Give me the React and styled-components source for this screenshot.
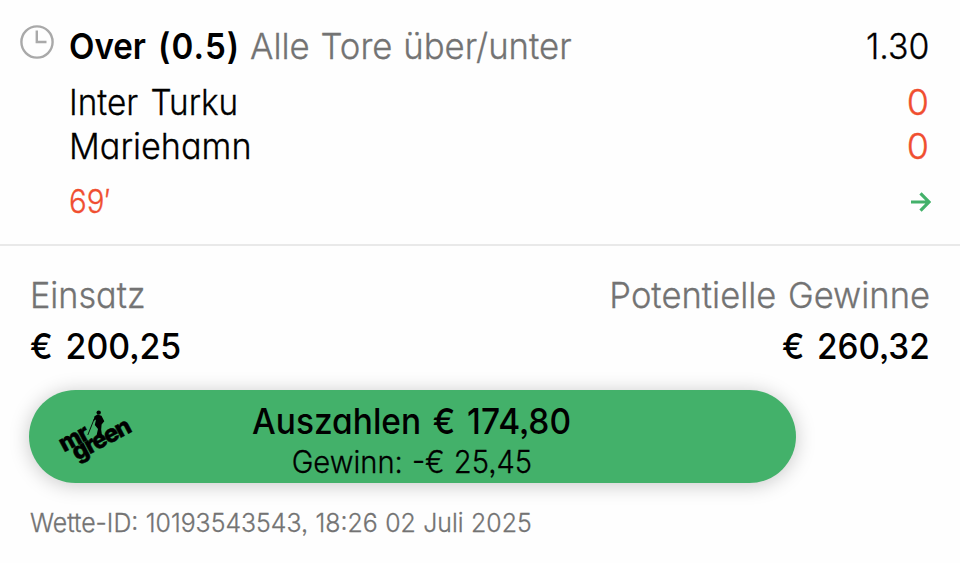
import styled, { createGlobalStyle } from "styled-components";

function App() {
  return (
    <>
      <GlobalStyle />
      <Card>
        <Selection>
          <Clock viewBox='0 0 34 34'>
            <circle cx='17' cy='17' r='15.6' />
            <path d='M16.8 5.5V17H26.5' />
          </Clock>
          <Details>
            <Row $height={57}>
              <Market>
                <Label $weight={600} $scale={0.92} $word={4}>
                  Over <Line>(0.5)</Line>
                </Label>
                <Label $color={grey} $scale={0.965} $word={1}>
                  Alle Tore über/unter
                </Label>
              </Market>
              <Label $scale={0.94} $right>
                1.30
              </Label>
            </Row>
            <Teams>
              <Row $height={44}>
                <Label $scale={0.925} $word={3}>
                  Inter Turku
                </Label>
                <Label $color={red}>0</Label>
              </Row>
              <Row $height={44}>
                <Label $scale={0.95}>Mariehamn</Label>
                <Label $color={red}>0</Label>
              </Row>
            </Teams>
            <Row $height={66}>
              <Label $size={32} $color={red} $scale={0.92}>
                69′
              </Label>
              <Arrow viewBox='0 0 20 20'>
                <path d='M0 10H18M9.5 1.3L18 10L9.5 18.7' />
              </Arrow>
            </Row>
          </Details>
        </Selection>

        <Summary>
          <Row $height={51}>
            <Label $color={grey} $scale={0.95}>
              Einsatz
            </Label>
            <Label $color={grey} $scale={0.96} $word={2} $right>
              Potentielle Gewinne
            </Label>
          </Row>
          <Row $height={51}>
            <Label $weight={500} $scale={0.94} $word={4}>
              € 200,25
            </Label>
            <Label $weight={500} $scale={0.925} $word={4} $right>
              € 260,32
            </Label>
          </Row>
          <CashOut>
            <Logo />
            <Label $weight={500} $scale={0.93} $word={3} $center>
              Auszahlen € 174,80
            </Label>
            <Profit $size={31} $scale={0.94} $word={1} $center>
              Gewinn: -€ 25,45
            </Profit>
          </CashOut>
          <Row $height={80}>
            <Label $size={26} $color={grey} $scale={0.956} $word={0.5}>
              Wette-ID: 10193543543, 18:26 02 Juli 2025
            </Label>
          </Row>
        </Summary>
      </Card>
    </>
  );
}

function Logo() {
  return (
    <LogoSvg viewBox='0 0 80 60'>
      <text transform='translate(9 44.5) rotate(-28)'>mr</text>
      <text transform='translate(22 53) rotate(-28)'>green</text>
      <circle cx='43.7' cy='4.6' r='2.2' />
      <path d='M39.5 8.2L42.5 6.6L46.5 7.8L49.3 13.2L46.6 16.4L46.2 21.5L47 27.5H41.5L43 21L39.8 17L41 11.5L38.4 13Z' />
      <path d='M39.2 11L32.8 27' stroke='#000' strokeWidth='0.9' />
    </LogoSvg>
  );
}

export default App;

const grey = "#737373";
const red = "#f04e30";

const GlobalStyle = createGlobalStyle`
  body {
    margin: 0;
    background: #fefefe;
  }
`;

const Card = styled.main`
  width: 960px;
  height: 563px;
  overflow: hidden;
  background: #fefefe;
  font-family: "Inter", sans-serif;
  font-feature-settings: "cv11", "ss03";
`;

const Selection = styled.section`
  display: flex;
  height: 244px;
  box-sizing: border-box;
  padding: 18px 31px 0 20px;
`;

const Clock = styled.svg`
  width: 34px;
  height: 34px;
  margin: 7px 15px 0 0;
  flex: none;
  fill: none;
  stroke: #a9a9a9;
  stroke-width: 2.4;
`;

const Details = styled.div`
  flex: 1;
`;

const Row = styled.div`
  display: flex;
  justify-content: space-between;
  align-items: center;
  height: ${(p) => p.$height}px;
`;

const Teams = styled.div`
  margin-top: 6px;
`;

const Label = styled.span`
  display: block;
  color: ${(p) => p.$color || "#000"};
  font-size: ${(p) => p.$size || 36}px;
  font-weight: ${(p) => p.$weight || 300};
  -webkit-text-stroke: ${(p) => (p.$weight ? 0 : 0.3)}px currentColor;
  word-spacing: ${(p) => p.$word || 0}px;
  line-height: 1.2;
  white-space: nowrap;
  /* condenses the letters a little */
  transform: scaleX(${(p) => p.$scale || 1});
  transform-origin: ${(p) => (p.$center ? "center" : p.$right ? "right" : "left")};
`;

const Line = styled.span`
  letter-spacing: 1.2px;
`;

const Market = styled.div`
  display: flex;

  ${Label} + ${Label} {
    margin-left: -5px;
  }
`;

const Profit = styled(Label)`
  margin: -1px 0 -1px;
`;

const Arrow = styled.svg`
  width: 20px;
  height: 20px;
  margin-right: -2px;
  fill: none;
  stroke: #43b16a;
  stroke-width: 3.2;
`;

const Summary = styled.section`
  border-top: 2px solid #e9e9e9;
  padding: 24px 30px 0;
`;

const CashOut = styled.button`
  position: relative;
  display: flex;
  flex-direction: column;
  align-items: center;
  justify-content: center;
  width: 767px;
  height: 93px;
  margin: 18px 0 0 -1px;
  padding: 6px 2px 0 0;
  border: 0;
  border-radius: 47px;
  background: #43b16a;
  box-shadow: 0 2px 20px rgba(0, 0, 0, 0.22);
  font: inherit;
  font-feature-settings: inherit;
`;

const LogoSvg = styled.svg`
  position: absolute;
  left: 26px;
  top: 18px;
  width: 80px;
  height: 60px;
  overflow: visible;

  text {
    font-family: "Inter", sans-serif;
    font-size: 24px;
    font-weight: 800;
    letter-spacing: -1.3px;
    stroke: #000;
    stroke-width: 0.5px;
  }
`;
